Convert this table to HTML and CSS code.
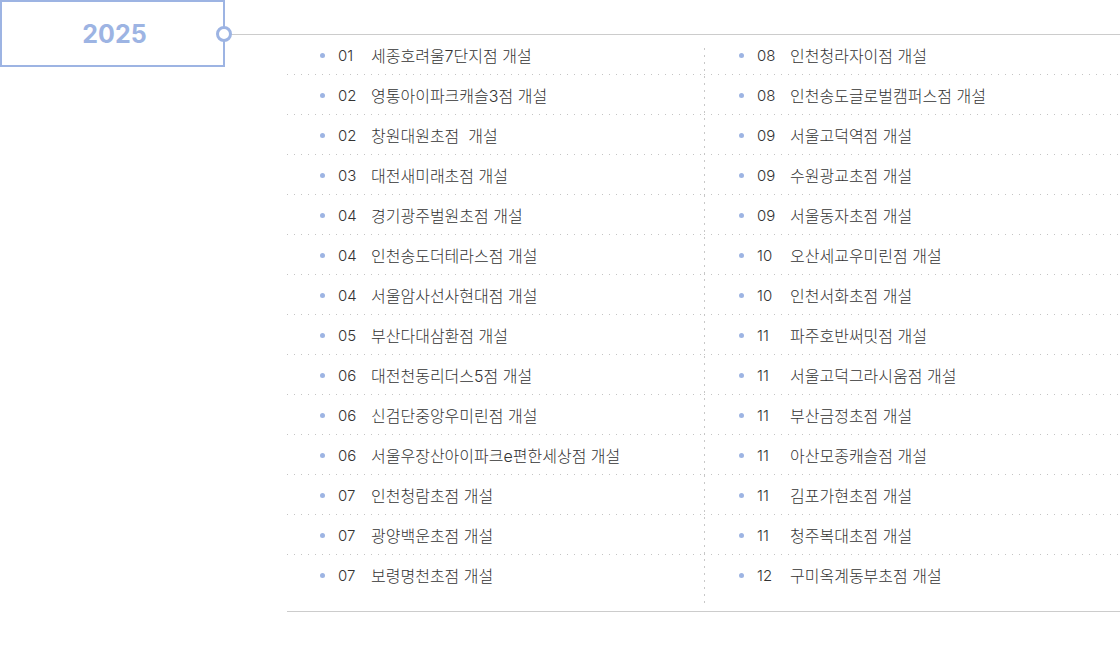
FILE: index.html
```html
<!DOCTYPE html>
<html lang="ko">
<head>
<meta charset="utf-8">
<title>2025</title>
<link rel="stylesheet" href="styles.css">
</head>
<body>
<div class="timeline">
  <div class="year-col">
    <div class="year-box">2025<span class="dot"></span></div>
  </div>
  <div class="content">
    <div class="lists">
      <ul class="col col-left">
        <li><span class="bullet"></span><span class="num">01</span><span class="txt">세종호려울7단지점 개설</span></li>
        <li><span class="bullet"></span><span class="num">02</span><span class="txt">영통아이파크캐슬3점 개설</span></li>
        <li><span class="bullet"></span><span class="num">02</span><span class="txt">창원대원초점&nbsp; 개설</span></li>
        <li><span class="bullet"></span><span class="num">03</span><span class="txt">대전새미래초점 개설</span></li>
        <li><span class="bullet"></span><span class="num">04</span><span class="txt">경기광주벌원초점 개설</span></li>
        <li><span class="bullet"></span><span class="num">04</span><span class="txt">인천송도더테라스점 개설</span></li>
        <li><span class="bullet"></span><span class="num">04</span><span class="txt">서울암사선사현대점 개설</span></li>
        <li><span class="bullet"></span><span class="num">05</span><span class="txt">부산다대삼환점 개설</span></li>
        <li><span class="bullet"></span><span class="num">06</span><span class="txt">대전천동리더스5점 개설</span></li>
        <li><span class="bullet"></span><span class="num">06</span><span class="txt">신검단중앙우미린점 개설</span></li>
        <li><span class="bullet"></span><span class="num">06</span><span class="txt">서울우장산아이파크e편한세상점 개설</span></li>
        <li><span class="bullet"></span><span class="num">07</span><span class="txt">인천청람초점 개설</span></li>
        <li><span class="bullet"></span><span class="num">07</span><span class="txt">광양백운초점 개설</span></li>
        <li><span class="bullet"></span><span class="num">07</span><span class="txt">보령명천초점 개설</span></li>
      </ul>
      <ul class="col col-right">
        <li><span class="bullet"></span><span class="num">08</span><span class="txt">인천청라자이점 개설</span></li>
        <li><span class="bullet"></span><span class="num">08</span><span class="txt">인천송도글로벌캠퍼스점 개설</span></li>
        <li><span class="bullet"></span><span class="num">09</span><span class="txt">서울고덕역점 개설</span></li>
        <li><span class="bullet"></span><span class="num">09</span><span class="txt">수원광교초점 개설</span></li>
        <li><span class="bullet"></span><span class="num">09</span><span class="txt">서울동자초점 개설</span></li>
        <li><span class="bullet"></span><span class="num">10</span><span class="txt">오산세교우미린점 개설</span></li>
        <li><span class="bullet"></span><span class="num">10</span><span class="txt">인천서화초점 개설</span></li>
        <li><span class="bullet"></span><span class="num">11</span><span class="txt">파주호반써밋점 개설</span></li>
        <li><span class="bullet"></span><span class="num">11</span><span class="txt">서울고덕그라시움점 개설</span></li>
        <li><span class="bullet"></span><span class="num">11</span><span class="txt">부산금정초점 개설</span></li>
        <li><span class="bullet"></span><span class="num">11</span><span class="txt">아산모종캐슬점 개설</span></li>
        <li><span class="bullet"></span><span class="num">11</span><span class="txt">김포가현초점 개설</span></li>
        <li><span class="bullet"></span><span class="num">11</span><span class="txt">청주복대초점 개설</span></li>
        <li><span class="bullet"></span><span class="num">12</span><span class="txt">구미옥계동부초점 개설</span></li>
      </ul>
    </div>
  </div>
</div>
</body>
</html>
```

FILE: styles.css
```css
html, body {
  margin: 0;
  padding: 0;
  background: #ffffff;
}

body {
  font-family: Inter, "Noto Sans CJK KR", sans-serif;
  color: #333333;
}

.timeline {
  display: flex;
  align-items: flex-start;
  width: 1120px;
}

.year-col {
  flex: 0 0 225px;
}

.year-box {
  position: relative;
  box-sizing: border-box;
  width: 225px;
  height: 67px;
  border: 2px solid #9db4e3;
  display: flex;
  align-items: center;
  justify-content: center;
  font-family: Inter, "Noto Sans", sans-serif;
  font-size: 25px;
  font-weight: 700;
  color: #9db4e3;
  padding-top: 1px;
  padding-left: 4px;
}

.dot {
  position: absolute;
  right: -9px;
  top: 24px;
  box-sizing: border-box;
  width: 16px;
  height: 16px;
  border: 3px solid #9db4e3;
  border-radius: 50%;
  background: #ffffff;
  z-index: 2;
}

.content {
  flex: 1;
  margin-top: 34px;
  border-top: 1px solid #cccccc;
  padding-left: 62px;
}

.lists {
  display: grid;
  grid-template-columns: 417px 1fr;
  padding-bottom: 16px;
  border-bottom: 1px solid #cccccc;
  background-image: repeating-linear-gradient(to bottom, #c8c8c8 0, #c8c8c8 2px, transparent 2px, transparent 7px);
  background-repeat: no-repeat;
  background-position: 417px 13px;
  background-size: 1px 557px;
}

.col {
  list-style: none;
  margin: 0;
  padding: 0;
}

.col li {
  box-sizing: border-box;
  height: 40px;
  padding-top: 1px;
  display: flex;
  align-items: center;
  font-size: 16px;
  font-weight: 300;
  line-height: 20px;
  background-image: linear-gradient(to right, #c4c4c4 1px, transparent 1px);
  background-repeat: repeat-x;
  background-position: left bottom;
  background-size: 7px 1px;
  white-space: nowrap;
}

.col li:last-child {
  background-image: none;
}

.col-left li {
  padding-left: 33px;
}

.col-right li {
  padding-left: 35px;
}

.bullet {
  flex: 0 0 5px;
  width: 5px;
  height: 5px;
  border-radius: 50%;
  background: #9db4e3;
  margin-right: 13px;
}

.num {
  flex: 0 0 33px;
  width: 33px;
  font-size: 15px;
}

.txt {
  letter-spacing: 0;
}
```
